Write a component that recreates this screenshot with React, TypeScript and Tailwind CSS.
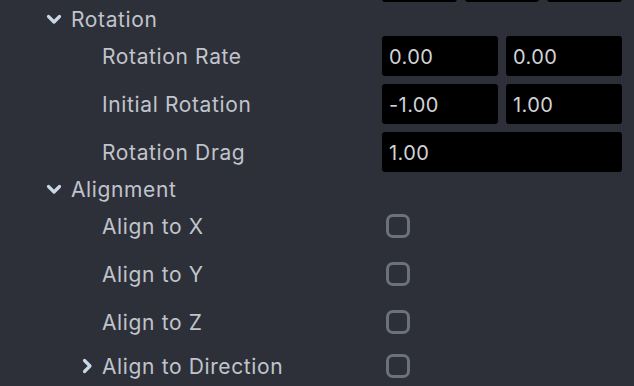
import React from "react";

const Chevron = ({ dir }: { dir: "down" | "right" }) => (
  <svg width="16" height="16" viewBox="0 0 16 16" className="shrink-0">
    {dir === "down" ? (
      <path d="M2.5 5.5 L8 11 L13.5 5.5" fill="none" stroke="#c9d8e6" strokeWidth="3.2" strokeLinecap="round" strokeLinejoin="round" />
    ) : (
      <path d="M5.5 2.5 L11 8 L5.5 13.5" fill="none" stroke="#c9d8e6" strokeWidth="3.2" strokeLinecap="round" strokeLinejoin="round" />
    )}
  </svg>
);

const Field = ({ v }: { v: string }) => (
  <div className="flex-1 h-10 bg-black rounded-[3px] flex items-center pl-[7px] pt-[2px] text-[20px] tracking-[0.02em] text-[#d2d3d6]">
    {v}
  </div>
);

const Check = () => (
  <div className="w-6 h-6 rounded-[7px] border-[3px] border-[#6c717d]" />
);

const Row = ({ label, children, h = "h-12" }: { label: string; children: React.ReactNode; h?: string }) => (
  <div className={`flex items-center ${h}`}>
    <div className="w-[382px] pl-[102px] pt-[2px] text-[21px] tracking-[0.03em] text-[#c0c4cc]">{label}</div>
    <div className="w-[240px] flex gap-2 items-center">{children}</div>
  </div>
);

const Header = ({ label }: { label: string }) => (
  <div className="flex items-center h-[26px] pl-[46px] gap-[9px] text-[21px] tracking-[0.03em] text-[#c0c4cc]">
    <Chevron dir="down" />
    <span className="pt-[2px]">{label}</span>
  </div>
);

export default function App() {
  return (
    <div
      className="w-[634px] h-[386px] overflow-hidden bg-[#2d3038]"
      style={{ fontFamily: "Inter, 'Noto Sans', sans-serif" }}
    >
      <div className="-mt-[42px]">
        <div className="flex items-center h-12">
          <div className="w-[382px]" />
          <div className="w-[240px] flex gap-2">
            <Field v="" />
            <Field v="" />
            <Field v="" />
          </div>
        </div>
        <Header label="Rotation" />
        <Row label="Rotation Rate">
          <Field v="0.00" />
          <Field v="0.00" />
        </Row>
        <Row label="Initial Rotation">
          <Field v="-1.00" />
          <Field v="1.00" />
        </Row>
        <Row label="Rotation Drag">
          <Field v="1.00" />
        </Row>
        <Header label="Alignment" />
        <Row label="Align to X">
          <div className="pl-1"><Check /></div>
        </Row>
        <Row label="Align to Y">
          <div className="pl-1"><Check /></div>
        </Row>
        <Row label="Align to Z">
          <div className="pl-1"><Check /></div>
        </Row>
        <div className="flex items-center h-10">
          <div className="w-[382px] pl-[79px] flex items-center gap-[7px] text-[21px] tracking-[0.03em] text-[#c0c4cc]">
            <Chevron dir="right" />
            <span className="pt-[2px]">Align to Direction</span>
          </div>
          <div className="pl-1"><Check /></div>
        </div>
      </div>
    </div>
  );
}
